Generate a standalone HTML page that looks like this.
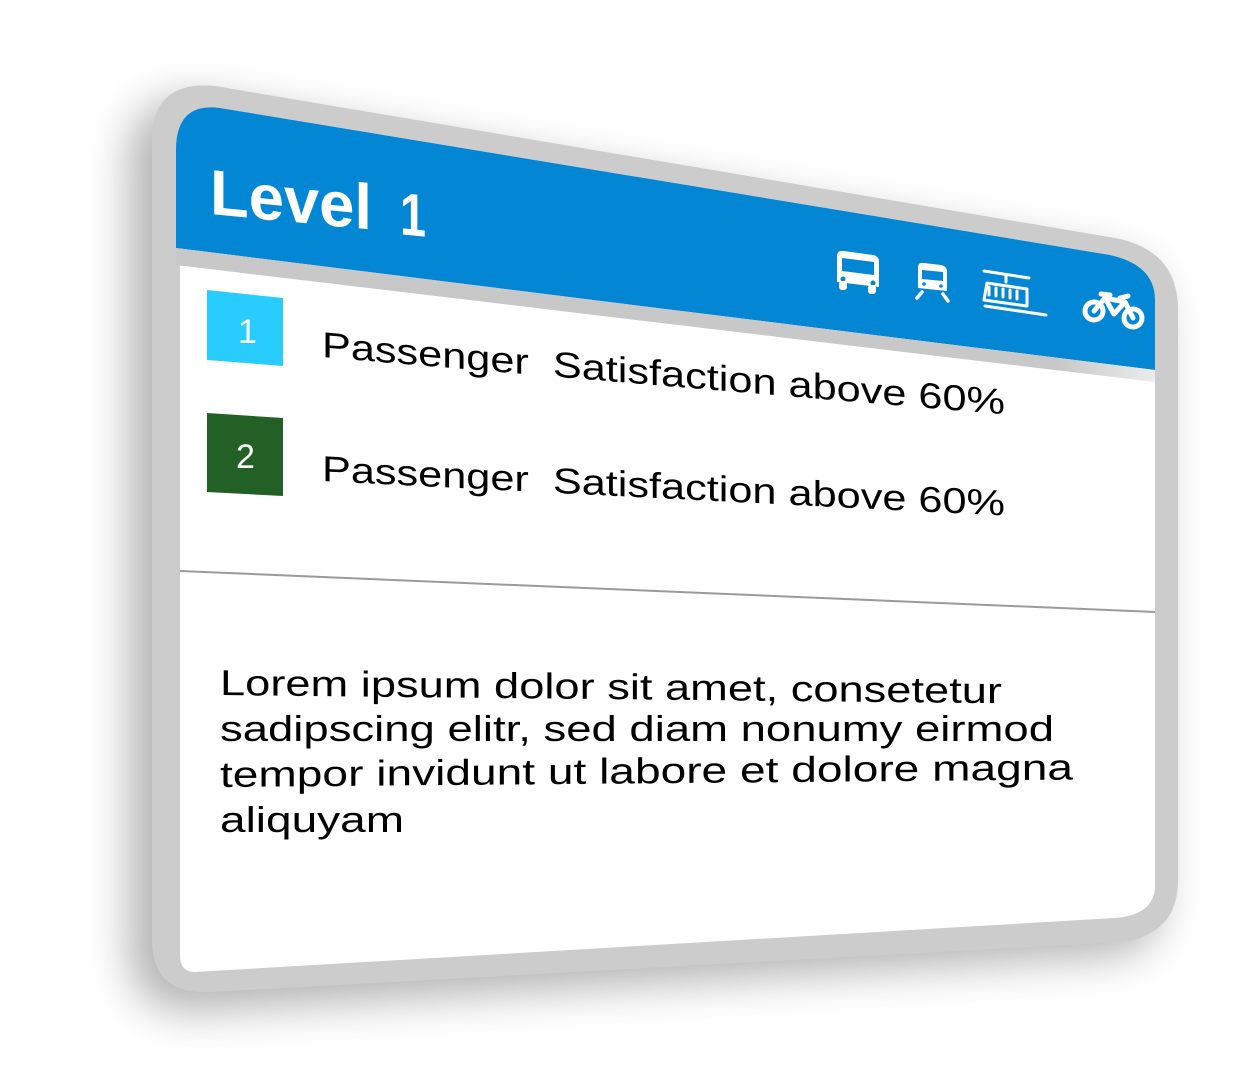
<!DOCTYPE html>
<html><head><meta charset="utf-8"><style>
html,body{margin:0;padding:0;background:#fff;width:1244px;height:1084px;overflow:hidden}
svg{display:block}
text{font-family:"Liberation Sans",sans-serif}
</style></head><body>
<svg width="1244" height="1084" viewBox="0 0 1244 1084">
<defs>
<filter id="sh" x="-20%" y="-20%" width="140%" height="140%">
<feGaussianBlur stdDeviation="22"/>
</filter>
<linearGradient id="band" x1="0" x2="1" y1="0" y2="0">
<stop offset="0" stop-color="#c8c8c8"/><stop offset="0.9" stop-color="#c8c8c8"/><stop offset="1" stop-color="#ececec"/>
</linearGradient>
</defs>
<path d="M130 160 Q130 95 200 100 L1120 260 Q1160 270 1160 320 L1160 900 Q1160 950 1110 955 L200 1010 Q130 1015 130 950 Z" fill="#000" opacity="0.3" filter="url(#sh)"/>
<path d="M152 140 Q152 80 215 86 L1115 238 Q1178 250 1178 310 L1178 880 Q1178 935 1120 942 L210 992 Q152 995 152 940 Z" fill="#cccccc"/>
<path d="M180 150 Q180 102 220 108 L1110 255 Q1155 265 1155 300 L1155 885 Q1155 915 1115 918 L195 972 Q180 972 180 955 Z" fill="#ffffff"/>
<path d="M176 150 Q176 102 220 108 L1110 255 Q1155 265 1155 300 L1155 370 L176 248 Z" fill="#0386d4"/>
<path d="M176 248 L1155 370 L1155 382 L176 265 Z" fill="url(#band)"/>
<path d="M180 571 L1155 612" stroke="#9a9a9a" stroke-width="2"/>
<g transform="translate(210,214) skewY(5.5)">
<text x="0" y="0" font-size="64" font-weight="bold" fill="#fff" textLength="162" lengthAdjust="spacingAndGlyphs">Level</text>
<text x="190" y="2" font-size="60" font-weight="bold" fill="#fff" textLength="26" lengthAdjust="spacingAndGlyphs">1</text>
</g>
<polygon points="207,290 283,298 283,366 207,360" fill="#29ccff"/>
<text x="238" y="343" font-size="34" fill="#fff">1</text>
<polygon points="207,413 283,418 283,496 207,492" fill="#236025"/>
<text x="236" y="468" font-size="34" fill="#fff">2</text>
<g transform="translate(322,357) skewY(4.8)">
<text x="0" y="0" font-size="36" fill="#000" textLength="683" lengthAdjust="spacingAndGlyphs">Passenger&#160; Satisfaction above 60%</text>
</g>
<g transform="translate(322,481) skewY(2.9)">
<text x="0" y="0" font-size="36" fill="#000" textLength="683" lengthAdjust="spacingAndGlyphs">Passenger&#160; Satisfaction above 60%</text>
</g>
<g fill="#000" font-size="36">
<text x="220" y="695" textLength="782" lengthAdjust="spacingAndGlyphs" transform="skewY(0.6)" transform-origin="220 695">Lorem ipsum dolor sit amet, consetetur</text>
<text x="220" y="741" textLength="834" lengthAdjust="spacingAndGlyphs">sadipscing elitr, sed diam nonumy eirmod</text>
<text x="220" y="787" textLength="853" lengthAdjust="spacingAndGlyphs" transform="skewY(-0.5)" transform-origin="220 787">tempor invidunt ut labore et dolore magna</text>
<text x="220" y="832" textLength="184" lengthAdjust="spacingAndGlyphs">aliquyam</text>
</g>
<g fill="none" stroke="#fff" stroke-width="4" stroke-linecap="round" stroke-linejoin="round">
<!-- bus -->
<path d="M837 256 Q837 250 844 251 L873 255 Q879 256 879 262 L879 287 L837 282 Z" fill="#fff" stroke="none"/>
<path d="M842 258 L874 262 L874 275 L842 271 Z" fill="#0386d4" stroke="none"/>
<circle cx="843" cy="279" r="2.5" fill="#0386d4" stroke="none"/>
<circle cx="873" cy="283" r="2.5" fill="#0386d4" stroke="none"/>
<rect x="839" y="281" width="8" height="9" rx="3" fill="#fff" stroke="none"/>
<rect x="868" y="285" width="8" height="9" rx="3" fill="#fff" stroke="none"/>
<!-- train -->
<path d="M918 267 Q918 262 924 263 L941 265 Q947 266 947 272 L947 291 L918 288 Z" fill="#fff" stroke="none"/>
<path d="M922 270 L943 272 L943 281 L922 279 Z" fill="#0386d4" stroke="none"/>
<circle cx="924" cy="284" r="1.8" fill="#0386d4" stroke="none"/>
<circle cx="941" cy="286" r="1.8" fill="#0386d4" stroke="none"/>
<path d="M922 292 L917 298 M943 294 L948 301" stroke-width="3.5"/>
<!-- tram -->
<path d="M984 271 L1029 278 M1006 276 L1006 282 M987 283 L1027 289 L1027 306 L984 300 Z" stroke-width="3"/>
<path d="M989 287 v8 M996 288 v8 M1003 289 v8 M1010 290 v8 M1017 291 v8" stroke-width="3"/>
<path d="M985 306 L1046 315" stroke-width="3"/>
<!-- bike -->
<circle cx="1094" cy="311" r="9" stroke-width="5"/>
<circle cx="1133" cy="318" r="9" stroke-width="5"/>
<path d="M1094 311 L1105 298 L1125 302 L1133 318 M1105 298 L1114 314 L1125 302 M1101 294 L1110 295 M1120 298 L1128 296" stroke-width="5"/>
</g>
</svg>
</body></html>
